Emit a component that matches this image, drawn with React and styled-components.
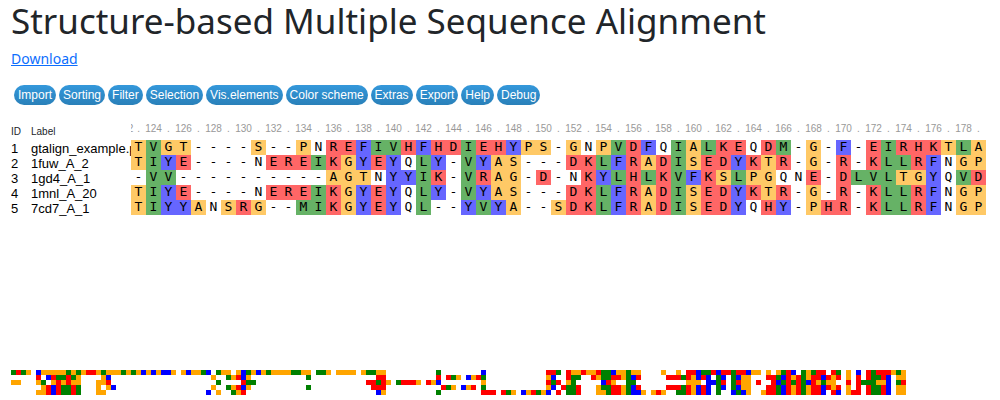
import React from "react";
import styled, { createGlobalStyle } from "styled-components";

const GlobalStyle = createGlobalStyle`
  body {
    margin: 0;
    background: #fff;
    color: #212529;
    font-family: "Noto Sans", "Liberation Sans", sans-serif;
    font-size: 14px;
    line-height: 21px;
  }
`;

const CELL = {
  orange: "#ffc966",
  green: "#66b266",
  blue: "#6666ff",
  red: "#ff6666",
};

const SOLID = {
  orange: "#ffa500",
  green: "#008000",
  blue: "#0000ff",
  red: "#ff0000",
};

const CODES = { O: "orange", G: "green", B: "blue", R: "red" };

function residueClass(letter) {
  if ("AGPST".includes(letter)) return "orange";
  if ("ILMV".includes(letter)) return "green";
  if ("FWY".includes(letter)) return "blue";
  if ("DEHKR".includes(letter)) return "red";
  return null;
}

const FIRST = 122;
const LENGTH = 179;
const ZOOM = 5;

/* "lead" holds the residue classes of the columns scrolled off to the left,
   as [first column, class codes] runs. */
const SEQUENCES = [
  {
    label: "gtalign_example.pdb",
    residues: "TVGT----S--PNREFIVHFHDIEHYPS-GNPVDFQIALKEQDM-G-F-EIRHKTLA",
    lead: [
      [0, "GRGO"], [5, "BOOOOOGOGORROGOOOGOGOBOBOBBO"], [34, "OBOOGB"],
      [41, "GOO"], [45, "OBGOBOGOOOOGGOO"], [61, "GGO"], [65, "OOOO"],
      [70, "OGGOO"], [85, "G"], [94, "B"], [107, "RRG"], [111, "ROOROORGGBO"],
    ],
  },
  {
    label: "1fuw_A_2",
    residues: "TIYE----NEREIKGYEYQLY-VYAS---DKLFRADISEDYKTR-G-R-KLLRFNGP",
    lead: [
      [5, "R"], [7, "BRGGRGO"], [18, "OB"], [40, "O"], [43, "GORBO"],
      [59, "G"], [73, "RR"], [85, "R"], [87, "RGO"], [91, "BORG"],
      [107, "OB"], [111, "RGG"], [116, "ROGGRR"],
    ],
  },
  {
    label: "1gd4_A_1",
    residues: "-VV----------AGTNYYIK-VRAG-D-NKYLHLKVFKSLPGQNE-DLVLTGYQVD",
    lead: [
      [0, "OO"], [5, "OG"], [8, "OROROO"], [17, "OOR"], [41, "G"],
      [46, "RGG"], [71, "RRGRO"], [77, "GRRRO"], [83, "ROB"], [94, "O"],
      [107, "RGR"], [111, "OG"], [118, "BRO"],
    ],
  },
  {
    label: "1mnl_A_20",
    residues: "TIYE----NEREIKGYEYQLY-VYAS---DKLFRADISEDYKTR-G-R-KLLRFNGP",
    lead: [
      [6, "ORBRGGRG"], [17, "O"], [19, "OB"], [40, "O"], [43, "GORBO"],
      [59, "G"], [72, "RRR"], [86, "RGO"], [90, "BOR"], [94, "G"],
      [107, "OB"], [110, "RGGR"], [117, "OGGRR"],
    ],
  },
  {
    label: "7cd7_A_1",
    residues: "TIYYANSRG--MIKGYEYQL--YVYA--SDKLFRADISEDYQHY-PHR-KLLRFNGP",
    lead: [
      [5, "OORBRGGRG"], [17, "OO"], [39, "B"], [41, "O"], [44, "GOR"],
      [73, "BO"], [85, "G"], [94, "RRR"], [98, "RGO"], [102, "BORGOB"],
      [109, "R"], [111, "GGR"], [117, "OOGRR"],
    ],
  },
];

const MENU = [
  "Import", "Sorting", "Filter", "Selection", "Vis.elements",
  "Color scheme", "Extras", "Export", "Help", "Debug",
];

const Page = styled.main`
  padding: 0 11px;
`;

const Title = styled.h1`
  margin: 0;
  font-size: 35px;
  font-weight: 400;
  line-height: 42px;
`;

const DownloadLink = styled.a`
  display: block;
  width: fit-content;
  margin-top: 6px;
  color: #0d6efd;
  text-decoration: underline;
`;

const MenuBar = styled.nav`
  display: flex;
  flex-wrap: wrap;
  gap: 3px;
  margin: 16px 3px 0;
`;

const MenuButton = styled.button`
  height: 20px;
  padding: 0 4px;
  border: 0;
  border-radius: 10px;
  background: linear-gradient(to bottom, #3498db, #2980b9);
  color: #fff;
  font: 12px/20px "Liberation Sans", sans-serif;
  white-space: nowrap;
  cursor: pointer;
`;

const Stage = styled.section`
  min-height: 249px;
  margin-top: 16px;
  overflow-x: clip;
`;

const Alignment = styled.table`
  table-layout: fixed;
  width: 0;
  border-collapse: collapse;
  font-family: "Liberation Sans", sans-serif;
`;

const Column = styled.col`
  width: ${(p) => p.$width}px;
`;

const Heading = styled.th`
  height: 16px;
  padding: 0;
  font-size: 10px;
  font-weight: 400;
  line-height: 16px;
  text-align: left;
  vertical-align: bottom;
`;

const Position = styled(Heading)`
  color: #999;
`;

const Tick = styled.div`
  display: flex;
  justify-content: ${(p) => (p.$clipped ? "flex-end" : "center")};
  gap: 4px;
  width: 15px;
  height: 19px;
  padding-right: ${(p) => (p.$clipped ? 6 : 0)}px;
  box-sizing: border-box;
  overflow: ${(p) => (p.$clipped ? "hidden" : "visible")};
`;

const Name = styled.td`
  height: 15px;
  padding: 0;
  color: #000;
  font-size: 13px;
  line-height: 15px;
`;

const Clip = styled.div`
  height: 15px;
  padding-top: 1px;
  box-sizing: border-box;
  overflow-x: clip;
  overflow-y: visible;
  white-space: nowrap;
`;

const Residue = styled.td`
  height: 15px;
  padding: 0;
  background: ${(p) => CELL[p.$kind] || "#fff"};
  color: #000;
  font: 13px/13px "DejaVu Sans Mono", monospace;
  text-align: center;
  vertical-align: top;
`;

const Overview = styled.svg`
  display: block;
`;

function Ruler({ index }) {
  if (index === 0) {
    return (
      <Tick $clipped>
        <span>122</span>
        <span>.</span>
      </Tick>
    );
  }
  return <Tick>{index % 2 ? FIRST + index + 1 : "."}</Tick>;
}

function overviewCells(sequence) {
  const cells = [];
  sequence.lead.forEach(([start, codes]) =>
    [...codes].forEach((code, i) => cells.push([start + i, CODES[code]]))
  );
  [...sequence.residues].forEach((letter, i) => {
    const kind = residueClass(letter);
    if (kind) cells.push([FIRST + i, kind]);
  });
  return cells;
}

export default function App() {
  const columns = [...SEQUENCES[0].residues];
  return (
    <Page>
      <GlobalStyle />
      <Title>Structure-based Multiple Sequence Alignment</Title>
      <DownloadLink href="#download">Download</DownloadLink>
      <MenuBar>
        {MENU.map((item) => (
          <MenuButton key={item} type="button">{item}</MenuButton>
        ))}
      </MenuBar>
      <Stage>
        <Alignment>
          <colgroup>
            <Column $width={20} />
            <Column $width={100} />
            {columns.map((_, i) => <Column key={i} $width={15} />)}
          </colgroup>
          <thead>
            <tr>
              <Heading scope="col">ID</Heading>
              <Heading scope="col">Label</Heading>
              {columns.map((_, i) => (
                <Position key={i}><Ruler index={i} /></Position>
              ))}
            </tr>
          </thead>
          <tbody>
            {SEQUENCES.map((sequence, row) => (
              <tr key={sequence.label}>
                <Name><Clip>{row + 1}</Clip></Name>
                <Name><Clip>{sequence.label}</Clip></Name>
                {[...sequence.residues].map((letter, i) => (
                  <Residue key={i} $kind={residueClass(letter)}>{letter}</Residue>
                ))}
              </tr>
            ))}
          </tbody>
        </Alignment>
      </Stage>
      <Overview
        width={LENGTH * ZOOM}
        height={SEQUENCES.length * ZOOM}
        shapeRendering="crispEdges"
        role="img"
        aria-label="Alignment overview"
      >
        {SEQUENCES.map((sequence, row) =>
          overviewCells(sequence).map(([column, kind]) => (
            <rect
              key={`${row}-${column}`}
              x={column * ZOOM}
              y={row * ZOOM}
              width={ZOOM}
              height={ZOOM}
              fill={SOLID[kind]}
            />
          ))
        )}
      </Overview>
    </Page>
  );
}
